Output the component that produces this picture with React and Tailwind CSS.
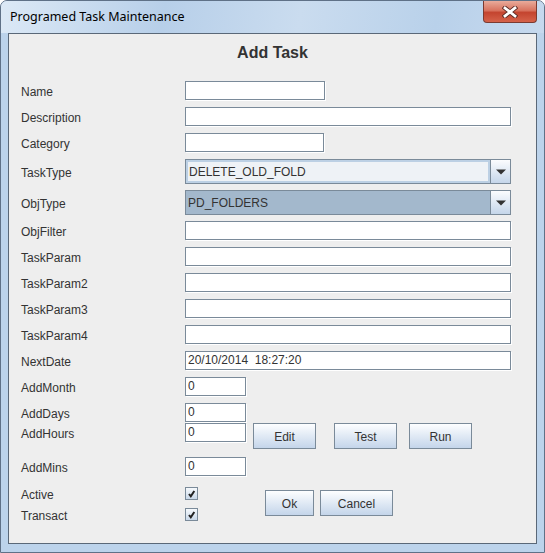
import React from "react";

const FONT = "font-['Liberation_Sans',Arial,sans-serif]";

function Field({ w, value = "" }) {
  return (
    <div
      className={`h-[19px] ${w} bg-white border border-[#7a8a99] shadow-[1px_1px_0_#ffffff] pl-[2px] text-[12px] leading-[17px] text-[#333333] whitespace-pre`}
    >
      {value}
    </div>
  );
}

function Combo({ value, selected }) {
  return (
    <div className="flex h-[25px] w-[326px] border border-[#7a8a99]">
      <div
        className={
          selected
            ? "flex-1 flex items-center bg-[#a3b8cc] pl-[2px] text-[12px] text-[#333333]"
            : "flex-1 flex items-center bg-[#eef2f6] border-2 border-[#bcd0e4] pl-[1px] text-[12px] text-[#333333]"
        }
      >
        {value}
      </div>
      <div className="w-[20px] border-l border-[#7a8a99] bg-gradient-to-b from-[#fbfcfe] to-[#c5d6ea] flex items-center justify-center">
        <svg width="10" height="6" viewBox="0 0 10 6">
          <path d="M0 0.5 L10 0.5 L5 5.5 Z" fill="#333333" />
        </svg>
      </div>
    </div>
  );
}

function Btn({ w, ml, children }) {
  return (
    <div
      className={`h-[26px] ${w} ${ml} shrink-0 border border-[#7a8a99] bg-gradient-to-b from-[#fdfeff] to-[#c4d5ea] flex items-center justify-center pt-[1px] text-[12px] text-[#333333]`}
    >
      {children}
    </div>
  );
}

function Check() {
  return (
    <div className="w-[13px] h-[13px] border border-[#7a8a99] bg-gradient-to-b from-[#f6f9fc] to-[#c9d8e9] flex items-center justify-center">
      <svg width="9" height="9" viewBox="0 0 9 9">
        <path d="M2 5 L3.8 7.3 L7.3 2" stroke="#222222" strokeWidth="2" fill="none" />
      </svg>
    </div>
  );
}

function Row({ label, mt, h = "h-[19px]", children }) {
  return (
    <div className={`flex items-center ${mt} ${h}`}>
      <div className="w-[164px] shrink-0 pt-[2px] text-[12px] text-[#333333]">{label}</div>
      {children}
    </div>
  );
}

export default function App() {
  return (
    <div
      className={`w-[545px] h-[553px] bg-[#bcd3eb] border border-[#5f7187] rounded-t-[7px] overflow-hidden flex flex-col ${FONT}`}
    >
      <div className="h-[32px] shrink-0 flex justify-between bg-[linear-gradient(100deg,#dce9f6_0%,#b7cfe9_30%,#cadcef_55%,#b9d1ea_80%,#c6d9ee_100%)]">
        <div className="self-center pl-[9px] text-[12.5px] text-black font-['Noto_Sans',sans-serif]">
          Programed Task Maintenance
        </div>
        <div className="mr-[7px] w-[54px] h-[22px] rounded-b-[4px] border border-t-0 border-[#7b3a30] bg-[linear-gradient(180deg,#e9ab9b_0%,#d8735f_45%,#c4442f_55%,#d5624a_100%)] flex items-center justify-center">
          <svg width="16" height="12" viewBox="0 0 16 12">
            <path d="M3 2 L13 10 M13 2 L3 10" stroke="#5a2a24" strokeWidth="4.6" strokeLinecap="square" />
            <path d="M3 2 L13 10 M13 2 L3 10" stroke="#ffffff" strokeWidth="2.8" strokeLinecap="square" />
          </svg>
        </div>
      </div>
      <div className="mx-[7px] h-[511px] shrink-0 border border-[#5a6878] bg-[#eeeeee] pl-[12px] flex flex-col">
        <div className="h-[47px] shrink-0 pt-[10px] pr-[12px] text-center text-[16px] leading-[18px] font-bold text-[#333333]">
          Add Task
        </div>
        <Row label="Name" mt="mt-0">
          <Field w="w-[140px]" />
        </Row>
        <Row label="Description" mt="mt-[7px]">
          <Field w="w-[326px]" />
        </Row>
        <Row label="Category" mt="mt-[7px]">
          <Field w="w-[139px]" />
        </Row>
        <Row label="TaskType" mt="mt-[7px]" h="h-[25px]">
          <Combo value="DELETE_OLD_FOLD" />
        </Row>
        <Row label="ObjType" mt="mt-[6px]" h="h-[25px]">
          <Combo value="PD_FOLDERS" selected />
        </Row>
        <Row label="ObjFilter" mt="mt-[6px]">
          <Field w="w-[326px]" />
        </Row>
        <Row label="TaskParam" mt="mt-[7px]">
          <Field w="w-[326px]" />
        </Row>
        <Row label="TaskParam2" mt="mt-[7px]">
          <Field w="w-[326px]" />
        </Row>
        <Row label="TaskParam3" mt="mt-[7px]">
          <Field w="w-[326px]" />
        </Row>
        <Row label="TaskParam4" mt="mt-[7px]">
          <Field w="w-[326px]" />
        </Row>
        <Row label="NextDate" mt="mt-[7px]">
          <Field w="w-[326px]" value="20/10/2014  18:27:20" />
        </Row>
        <Row label="AddMonth" mt="mt-[7px]">
          <Field w="w-[61px]" value="0" />
        </Row>
        <Row label="AddDays" mt="mt-[7px]">
          <Field w="w-[61px]" value="0" />
        </Row>
        <div className="flex items-start mt-[1px] h-[26px]">
          <div className="w-[164px] shrink-0 h-[19px] pt-[2px] flex items-center text-[12px] text-[#333333]">
            AddHours
          </div>
          <Field w="w-[61px]" value="0" />
          <Btn w="w-[63px]" ml="ml-[7px]">Edit</Btn>
          <Btn w="w-[63px]" ml="ml-[18px]">Test</Btn>
          <Btn w="w-[63px]" ml="ml-[12px]">Run</Btn>
        </div>
        <Row label="AddMins" mt="mt-[8px]">
          <Field w="w-[61px]" value="0" />
        </Row>
        <div className="flex items-start mt-[11px]">
          <div className="flex flex-col">
            <Row label="Active" mt="mt-0" h="h-[13px]">
              <Check />
            </Row>
            <Row label="Transact" mt="mt-[8px]" h="h-[13px]">
              <Check />
            </Row>
          </div>
          <div className="flex mt-[3px]">
            <Btn w="w-[49px]" ml="ml-[67px]">Ok</Btn>
            <Btn w="w-[73px]" ml="ml-[6px]">Cancel</Btn>
          </div>
        </div>
      </div>
    </div>
  );
}
